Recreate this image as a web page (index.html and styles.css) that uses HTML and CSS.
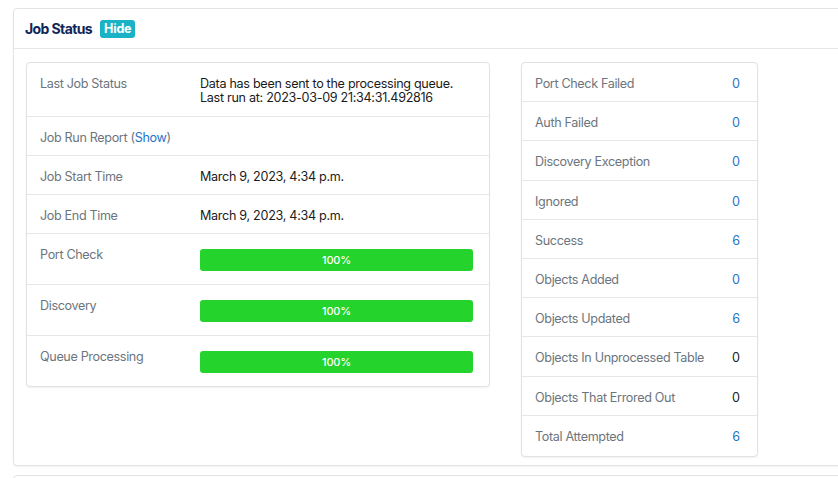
FILE: index.html
```html
<!DOCTYPE html>
<html>
<head>
<meta charset="utf-8">
<link rel="stylesheet" href="styles.css">
</head>
<body>
<div class="page">
  <section class="card">
    <header class="card-header">
      <h2 class="title">Job Status</h2>
      <span class="badge">Hide</span>
    </header>
    <div class="card-body">
      <div class="panel info">
        <div class="row">
          <div class="label">Last Job Status</div>
          <div class="value">Data has been sent to the processing queue.<br>Last run at: 2023-03-09 21:34:31.492816</div>
        </div>
        <div class="row">
          <div class="label">Job Run Report (<a class="link">Show</a>)</div>
          <div class="value"></div>
        </div>
        <div class="row">
          <div class="label">Job Start Time</div>
          <div class="value">March 9, 2023, 4:34 p.m.</div>
        </div>
        <div class="row">
          <div class="label">Job End Time</div>
          <div class="value">March 9, 2023, 4:34 p.m.</div>
        </div>
        <div class="row bar-row">
          <div class="label">Port Check</div>
          <div class="value"><div class="progress"><div class="fill" style="width:100%">100%</div></div></div>
        </div>
        <div class="row bar-row">
          <div class="label">Discovery</div>
          <div class="value"><div class="progress"><div class="fill" style="width:100%">100%</div></div></div>
        </div>
        <div class="row bar-row">
          <div class="label">Queue Processing</div>
          <div class="value"><div class="progress"><div class="fill" style="width:100%">100%</div></div></div>
        </div>
      </div>
      <div class="panel stats">
        <div class="srow"><span class="label">Port Check Failed</span><span class="num blue">0</span></div>
        <div class="srow"><span class="label">Auth Failed</span><span class="num blue">0</span></div>
        <div class="srow"><span class="label">Discovery Exception</span><span class="num blue">0</span></div>
        <div class="srow"><span class="label">Ignored</span><span class="num blue">0</span></div>
        <div class="srow"><span class="label">Success</span><span class="num blue">6</span></div>
        <div class="srow"><span class="label">Objects Added</span><span class="num blue">0</span></div>
        <div class="srow"><span class="label">Objects Updated</span><span class="num blue">6</span></div>
        <div class="srow"><span class="label">Objects In Unprocessed Table</span><span class="num">0</span></div>
        <div class="srow"><span class="label">Objects That Errored Out</span><span class="num">0</span></div>
        <div class="srow"><span class="label">Total Attempted</span><span class="num blue">6</span></div>
      </div>
    </div>
  </section>
  <section class="card next"></section>
</div>
</body>
</html>
```

FILE: styles.css
```css
html, body {
  margin: 0;
  padding: 0;
  overflow: hidden;
  background: #ffffff;
}
body {
  font-family: Inter, "Noto Sans", "Liberation Sans", sans-serif;
  font-size: 12.6px;
  color: #212529;
}
.page {
  padding: 8px 0 0 13px;
  width: 900px;
  height: 470px;
  overflow: hidden;
}
.card {
  border: 1px solid #e3e3e3;
  border-radius: 4px;
  background: #fff;
  box-shadow: 0 1px 2px rgba(0,0,0,0.05);
}
.card.next {
  margin-top: 9px;
  height: 40px;
}
.card-header {
  display: flex;
  align-items: center;
  gap: 8px;
  height: 39px;
  padding: 0 11px;
  border-bottom: 1px solid #e6e6e6;
}
.title {
  margin: 0;
  font-size: 14px;
  font-weight: 700;
  color: #0f2557;
  letter-spacing: -0.6px;
}
.badge {
  background: #1ab3c6;
  color: #fff;
  font-weight: 700;
  font-size: 12.5px;
  padding: 2px 4px;
  border-radius: 3px;
  line-height: 14px;
  letter-spacing: -0.2px;
}
.card-body {
  display: flex;
  align-items: flex-start;
  gap: 31px;
  padding: 13px 12px 10px 12px;
  height: 393px;
}
.panel {
  border: 1px solid #e2e2e2;
  border-radius: 4px;
  box-shadow: 0 1px 2px rgba(0,0,0,0.06);
  background: #fff;
}
.info {
  width: 462px;
}
.row {
  display: flex;
  padding: 14px 16px 10px 13px;
  line-height: 14.3px;
  border-bottom: 1px solid #e6e6e6;
}
.row:last-child {
  border-bottom: none;
}
.bar-row {
  padding-bottom: 13px;
}
.label {
  color: #6c757d;
  letter-spacing: -0.35px;
}
.row .label {
  width: 160px;
  flex: none;
}
.value {
  flex: 1;
  color: #1b1b1b;
  letter-spacing: -0.3px;
}
.link {
  color: #1f73c9;
}
.progress {
  margin-top: 1px;
  height: 22px;
  border-radius: 3px;
  background: #e9ecef;
  overflow: hidden;
}
.fill {
  height: 100%;
  background: #24d32b;
  color: #fff;
  font-size: 11px;
  font-weight: 500;
  line-height: 22px;
  text-align: center;
  letter-spacing: -0.2px;
}
.stats {
  width: 235px;
}
.srow {
  display: flex;
  justify-content: space-between;
  padding: 14px 17px 10px 13px;
  line-height: 14.2px;
  border-bottom: 1px solid #e6e6e6;
}
.srow:last-child {
  border-bottom: none;
  padding-bottom: 12px;
}
.num {
  color: #1b1b1b;
}
.num.blue {
  color: #1f73c9;
}
```
